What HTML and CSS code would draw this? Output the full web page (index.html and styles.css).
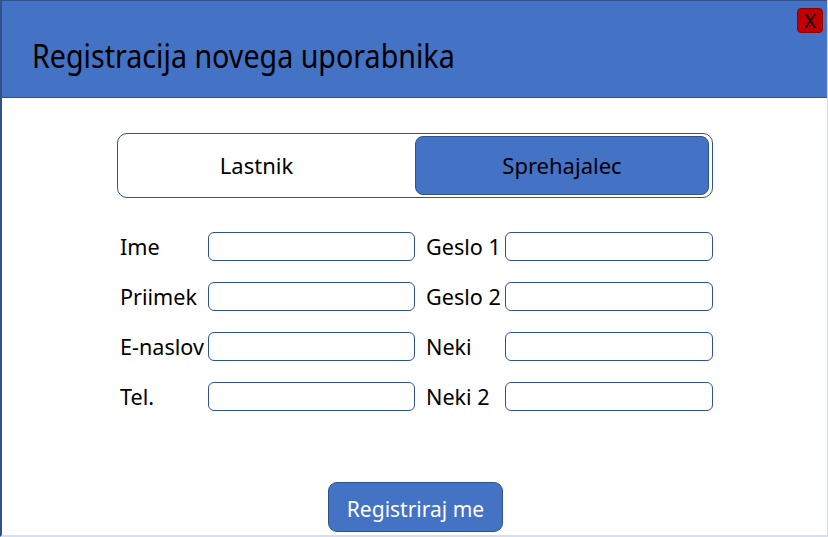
FILE: index.html
```html
<!DOCTYPE html>
<html lang="sl">
<head>
<meta charset="utf-8">
<title>Registracija novega uporabnika</title>
<link rel="stylesheet" href="styles.css">
</head>
<body>
<div class="frame">
  <header class="header">
    <h1 class="title"><span class="title-text">Registracija novega uporabnika</span></h1>
    <button class="close" type="button">X</button>
  </header>
  <main class="content">
    <div class="toggle">
      <div class="toggle-opt first">Lastnik</div>
      <div class="toggle-opt active">Sprehajalec</div>
    </div>
    <form class="form">
      <label class="lbl">Ime</label><input class="field" type="text">
      <label class="lbl lbl-r">Geslo 1</label><input class="field" type="password">
      <label class="lbl">Priimek</label><input class="field" type="text">
      <label class="lbl lbl-r">Geslo 2</label><input class="field" type="password">
      <label class="lbl">E-naslov</label><input class="field" type="text">
      <label class="lbl lbl-r">Neki</label><input class="field" type="text">
      <label class="lbl">Tel.</label><input class="field" type="text">
      <label class="lbl lbl-r">Neki 2</label><input class="field" type="text">
    </form>
    <div class="actions">
      <button class="submit" type="button">Registriraj me</button>
    </div>
  </main>
</div>
</body>
</html>
```
FILE: styles.css
```css
* { box-sizing: border-box; }
html, body { margin: 0; padding: 0; background: #fff; }
body {
  width: 828px;
  height: 537px;
  overflow: hidden;
  font-family: "Noto Sans", "Open Sans", sans-serif;
  color: #000;
}
.frame {
  width: 828px;
  height: 537px;
  border-left: 2px solid #2F528F;
  border-right: 1px solid #D6DCEC;
  border-bottom: 2px solid #D6DEF0;
  display: flex;
  flex-direction: column;
}
.header {
  position: relative;
  height: 98px;
  background: #4472C4;
  border-top: 1px solid #2F528F;
  border-bottom: 1px solid #2F528F;
  display: flex;
  align-items: center;
  padding-left: 30px;
}
.title {
  margin: 0;
  font-weight: 400;
  font-size: 32px;
  line-height: 1;
  padding-top: 14px;
}
.title-text {
  display: inline-block;
  transform: scaleX(0.895);
  transform-origin: left center;
}
.close {
  position: absolute;
  top: 7px;
  right: 4px;
  width: 26px;
  height: 25px;
  padding: 0;
  background: #C00000;
  border: 1px solid #8B0000;
  border-radius: 4px;
  font-family: "Noto Sans", sans-serif;
  font-size: 20px;
  line-height: 22px;
  color: #000;
}
.content {
  flex: 1;
  display: flex;
  flex-direction: column;
  padding-left: 115px;
}
.toggle {
  margin-top: 35px;
  width: 596px;
  height: 65px;
  border: 1px solid #2F528F;
  border-radius: 10px;
  display: flex;
  padding: 2px 3px 2px 2px;
}
.toggle-opt {
  flex: 0 0 294px;
  display: flex;
  align-items: center;
  justify-content: center;
  font-size: 22px;
  border-radius: 8px;
  padding-bottom: 1px;
}
.toggle-opt.first { flex-basis: 295px; padding-right: 22px; }
.toggle-opt.active {
  background: #4472C4;
  border: 1px solid #2F528F;
}
.form {
  margin-top: 34px;
  margin-left: 3px;
  display: grid;
  grid-template-columns: 88px 207px 90px 208px;
  row-gap: 21px;
  grid-auto-rows: 29px;
}
.lbl {
  font-size: 21.6px;
  display: flex;
  align-items: center;
  white-space: nowrap;
}
.lbl-r { padding-left: 11px; }
.field {
  width: 100%;
  height: 29px;
  border: 1px solid #2F528F;
  border-radius: 6px;
  background: #fff;
  margin: 0;
}
.actions {
  margin-top: 71px;
  margin-left: 211px;
}
.submit {
  width: 175px;
  height: 50px;
  background: #4472C4;
  border: 1px solid #2F528F;
  border-radius: 9px;
  color: #fff;
  font-family: "Noto Sans", "Open Sans", sans-serif;
  font-size: 21px;
  padding: 4px 0 0;
}
```
